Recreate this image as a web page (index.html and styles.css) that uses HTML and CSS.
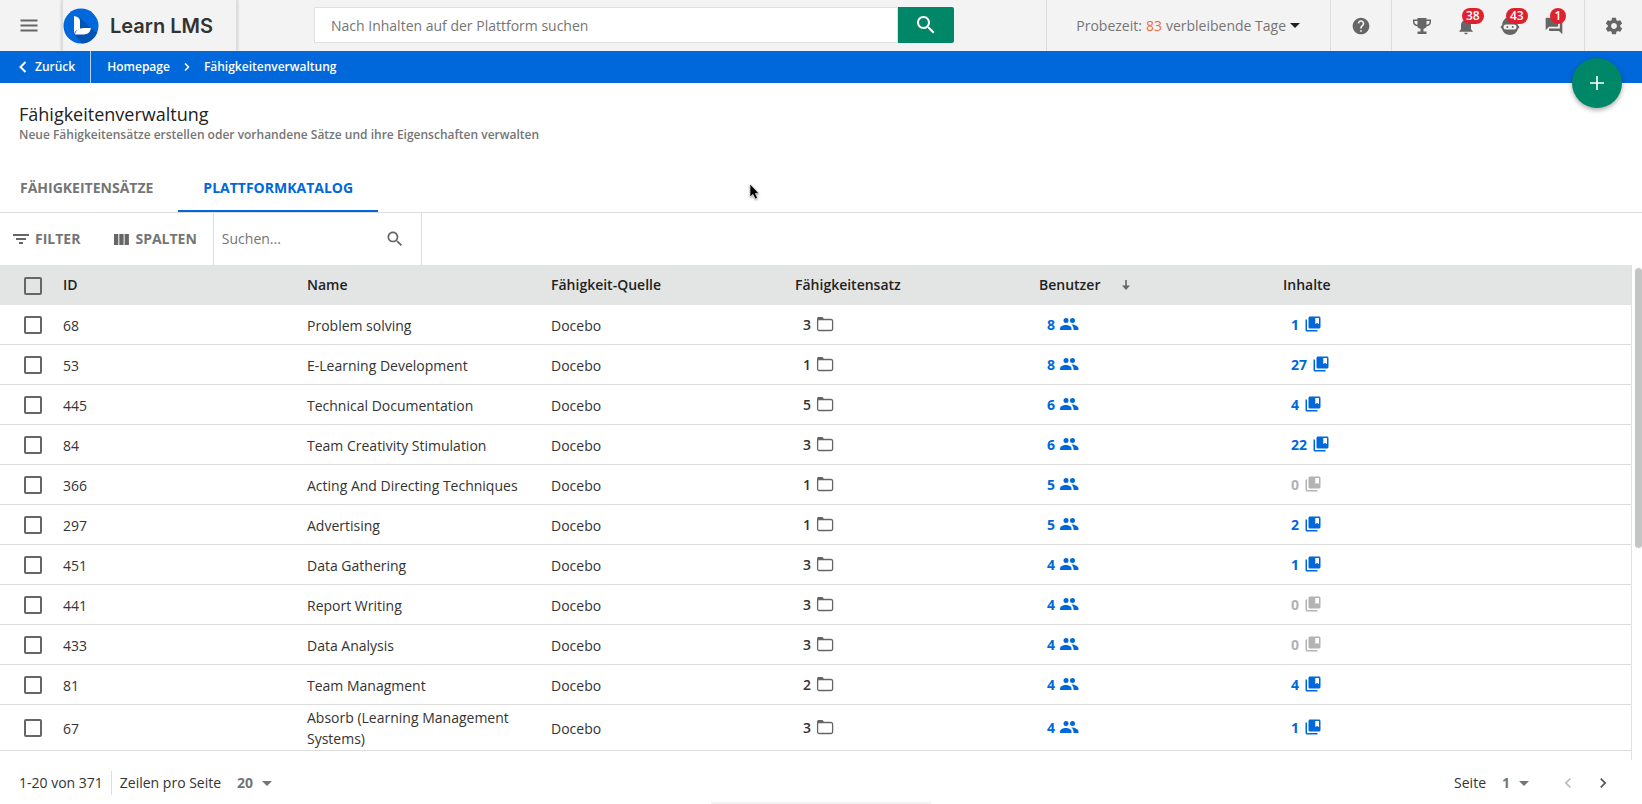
FILE: index.html
```html
<!DOCTYPE html>
<html lang="de">
<head>
    <meta charset="UTF-8">
    <meta name="viewport" content="width=device-width, initial-scale=1.0">
    <title>Fähigkeitenverwaltung</title>
    <link rel="stylesheet" href="styles.css">
</head>
<body>

<svg class="sprite" aria-hidden="true">
    <symbol id="i-search" viewBox="0 0 24 24"><path d="M15.5 14h-.79l-.28-.27C15.41 12.59 16 11.11 16 9.5 16 5.91 13.09 3 9.5 3S3 5.91 3 9.5 5.91 16 9.5 16c1.61 0 3.09-.59 4.23-1.57l.27.28v.79l5 4.99L20.49 19l-4.99-5zm-6 0C7.01 14 5 11.99 5 9.5S7.01 5 9.5 5 14 7.01 14 9.5 11.99 14 9.5 14z"/></symbol>
    <symbol id="i-folder" viewBox="0 0 18 16"><path d="M1 4h7V3L6.500 1H2.500Q1 1 1 2.500z"/><path d="M1.600 5V13a1.500 1.500 0 0 0 1.500 1.500h12a1.500 1.500 0 0 0 1.500-1.500V5a1.500 1.500 0 0 0-1.500-1.500H3A1.500 1.500 0 0 0 1.600 5z" fill="none" stroke="currentColor" stroke-width="1.300"/></symbol>
    <symbol id="i-people" viewBox="0 0 20 14"><circle cx="7" cy="3.500" r="2.500"/><circle cx="13.500" cy="3.500" r="2.500"/><path d="M1 13v-1.300C1 9.200 4 8 6.800 8s5.700 1.200 5.700 3.700V13z"/><path d="M12.400 7.500c3.600.1 7.100 1.800 7.100 4.200V13h-5v-1.300c0-1.600-1-3.200-2.100-4.200z"/></symbol>
    <symbol id="i-book" viewBox="0 0 24 24"><path d="M4 6H2v14c0 1.100.9 2 2 2h14v-2H4V6z"/><path d="M20 2H8c-1.100 0-2 .9-2 2v12c0 1.100.9 2 2 2h12c1.100 0 2-.9 2-2V4c0-1.100-.9-2-2-2zm0 10l-2.500-1.500L15 12V4h5v8z"/></symbol>
    <symbol id="i-left" viewBox="0 0 24 24"><path d="M15.410 7.410L14 6l-6 6 6 6 1.410-1.410L10.830 12z"/></symbol>
    <symbol id="i-right" viewBox="0 0 24 24"><path d="M10 6L8.590 7.410 13.170 12l-4.580 4.590L10 18l6-6z"/></symbol>
    <symbol id="i-caret" viewBox="0 0 10 5"><path d="M0 0h10L5 5z"/></symbol>
</svg>

<header class="topbar">
    <button class="menu-btn" aria-label="Menü">
        <svg width="24" height="24" viewBox="0 0 24 24"><path d="M3.500 17.500h17v-2h-17zm0-5h17v-2h-17zm0-7v2h17v-2z"/></svg>
    </button>
    <a class="logo" href="#">
        <svg width="36" height="36" viewBox="0 0 36 36">
            <circle cx="18" cy="18" r="17.500" fill="#0068da"/>
            <path d="M16 9l12.500 12L34 25a17.500 17.500 0 0 1-15 10.500L11 26z" fill="#0053b5"/>
            <path d="M11 8q6 1 6 5v8.500q-5.500.5-6 5z" fill="#fff"/>
            <path d="M12 26.500q1-6.500 9-6.500h7q-1 6-7 6.500z" fill="#fff"/>
        </svg>
        <span>Learn LMS</span>
    </a>
    <form class="search" role="search">
        <input type="text" placeholder="Nach Inhalten auf der Plattform suchen" aria-label="Nach Inhalten auf der Plattform suchen">
        <button type="button" aria-label="Suchen"><svg width="24" height="24"><use href="#i-search"/></svg></button>
    </form>
    <div class="topbar-right">
        <button class="trial">Probezeit: <b>83</b> verbleibende Tage <svg width="10" height="5"><use href="#i-caret"/></svg></button>
        <button class="cell help" aria-label="Hilfe">
            <svg width="20" height="20" viewBox="0 0 24 24"><path d="M12 2C6.480 2 2 6.480 2 12s4.480 10 10 10 10-4.480 10-10S17.520 2 12 2zm1 17h-2v-2h2v2zm2.070-7.750l-.9.920C13.450 12.900 13 13.500 13 15h-2v-.5c0-1.100.450-2.100 1.170-2.830l1.240-1.260c.370-.360.590-.860.590-1.410 0-1.100-.9-2-2-2s-2 .9-2 2H8c0-2.210 1.790-4 4-4s4 1.790 4 4c0 .880-.360 1.680-.930 2.250z"/></svg>
        </button>
        <div class="cell icons">
            <button aria-label="Erfolge">
                <svg width="20" height="20" viewBox="0 0 20 20"><path d="M5.500 2h9v1.500H19V6c0 2.300-1.600 4-4.200 4.200-.7 1.500-1.900 2.300-3.300 2.600v2.700h3V18h-9v-2.500h3v-2.700c-1.400-.3-2.600-1.100-3.300-2.600C2.600 10 1 8.300 1 6V3.500h4.500zm0 3h-3v1c0 1.500.9 2.500 3 2.700zm9 0v3.700c2.100-.2 3-1.200 3-2.700V5z"/></svg>
            </button>
            <button aria-label="Mitteilungen">
                <svg width="20" height="20" viewBox="0 0 24 24"><path d="M12 22c1.100 0 2-.9 2-2h-4c0 1.100.890 2 2 2zm6-6v-5c0-3.070-1.640-5.640-4.500-6.320V4c0-.830-.670-1.500-1.500-1.500s-1.500.670-1.500 1.500v.680C7.630 5.360 6 7.920 6 11v5l-2 2v1h16v-1l-2-2z"/></svg>
                <span class="badge">38</span>
            </button>
            <button aria-label="Coach">
                <svg width="20" height="20" viewBox="0 0 20 20"><path d="M10 1c4.400 0 7.500 3.400 7.800 8L19.500 11l-1.700 2.300C16.800 16.700 14 19 10 19s-6.800-2.300-7.800-5.700L.5 11l1.700-2C2.500 4.400 5.600 1 10 1zM6 8.500a2.500 2.500 0 0 0 0 5h8a2.500 2.500 0 0 0 0-5z"/><circle cx="7.300" cy="11" r="1"/><circle cx="12.700" cy="11" r="1"/></svg>
                <span class="badge">43</span>
            </button>
            <button aria-label="Nachrichten">
                <svg width="20" height="20" viewBox="0 0 24 24"><path d="M21 6h-2v9H6v2c0 .550.450 1 1 1h11l4 4V7c0-.550-.450-1-1-1zm-4 6V3c0-.550-.450-1-1-1H3c-.550 0-1 .450-1 1v14l4-4h10c.550 0 1-.450 1-1z"/></svg>
                <span class="badge">1</span>
            </button>
        </div>
        <button class="cell gear" aria-label="Einstellungen">
            <svg width="20" height="20" viewBox="0 0 24 24"><path d="M19.430 12.980c.040-.320.070-.640.070-.980s-.030-.660-.070-.980l2.110-1.650c.190-.150.240-.420.120-.640l-2-3.460c-.120-.220-.390-.300-.610-.220l-2.490 1c-.520-.400-1.080-.730-1.690-.980l-.380-2.650C14.460 2.180 14.250 2 14 2h-4c-.250 0-.460.180-.490.420l-.380 2.650c-.610.250-1.170.590-1.690.980l-2.490-1c-.230-.090-.490 0-.610.220l-2 3.460c-.130.220-.070.490.120.640l2.110 1.650c-.040.320-.070.650-.070.980s.030.660.070.980l-2.110 1.650c-.190.150-.240.420-.120.640l2 3.460c.120.220.390.300.610.220l2.490-1c.520.400 1.080.730 1.690.980l.380 2.650c.030.240.240.420.490.420h4c.250 0 .460-.180.490-.420l.380-2.650c.610-.250 1.170-.590 1.690-.980l2.490 1c.230.090.490 0 .610-.220l2-3.460c.120-.220.070-.490-.120-.640l-2.110-1.650zM12 15.500c-1.930 0-3.500-1.570-3.500-3.500s1.570-3.500 3.500-3.500 3.500 1.570 3.500 3.500-1.570 3.500-3.500 3.500z"/></svg>
        </button>
    </div>
</header>

<nav class="crumbs">
    <a class="back" href="#"><svg width="8" height="12" viewBox="0 0 8 12"><path d="M6.500 1L1.500 6l5 5" fill="none" stroke="currentColor" stroke-width="2"/></svg>Zurück</a>
    <a href="#">Homepage</a>
    <svg width="6" height="8" viewBox="0 0 6 8"><path d="M1 0.500L4.500 4 1 7.500" fill="none" stroke="currentColor" stroke-width="1.500"/></svg>
    <a href="#">Fähigkeitenverwaltung</a>
    <button class="fab" aria-label="Hinzufügen"><svg width="14" height="14" viewBox="0 0 14 14"><path d="M6.200 0h1.600v6.200H14v1.600H7.800V14H6.200V7.800H0V6.200h6.200z"/></svg></button>
</nav>

<section class="page-head">
    <h1>Fähigkeitenverwaltung</h1>
    <p>Neue Fähigkeitensätze erstellen oder vorhandene Sätze und ihre Eigenschaften verwalten</p>
</section>

<div class="tabs" role="tablist">
    <button role="tab">FÄHIGKEITENSÄTZE</button>
    <button role="tab" class="active" aria-selected="true">PLATTFORMKATALOG</button>
</div>

<div class="toolbar">
    <button class="tool filter"><svg width="16" height="10" viewBox="0 0 16 10"><path d="M0 0h16v2H0zM3 4h10v2H3zM6 8h4v2H6z"/></svg>FILTER</button>
    <button class="tool"><svg width="15" height="11" viewBox="0 0 15 11"><path d="M0 0h4.300v11H0zM5.300 0h4.300v11H5.300zM10.600 0h4.300v11h-4.300z"/></svg>SPALTEN</button>
    <div class="table-search">
        <input type="text" placeholder="Suchen..." aria-label="Suchen">
        <svg width="20" height="20"><use href="#i-search"/></svg>
    </div>
</div>

<main class="grid">
    <div class="grid-scroll">
        <table>
            <thead>
            <tr>
                <th class="check"><input type="checkbox" aria-label="Alle auswählen"></th>
                <th class="col">ID</th>
                <th class="col">Name</th>
                <th class="col">Fähigkeit-Quelle</th>
                <th class="col">Fähigkeitensatz</th>
                <th class="col">Benutzer <svg class="sort" width="8" height="10" viewBox="0 0 8 10"><path d="M3.200 0h1.600v5.500H8L4 10 0 5.500h3.200z"/></svg></th>
                <th class="col">Inhalte</th>
                <th></th>
            </tr>
            </thead>
            <tbody id="skills"></tbody>
        </table>
    </div>
    <div class="scrollbar"><div class="thumb"></div></div>
</main>

<footer class="pager">
    <span class="range">1-20 von 371</span>
    <label for="rows">Zeilen pro Seite</label>
    <span class="select">
        <select id="rows"><option>20</option></select>
        <svg width="10" height="5"><use href="#i-caret"/></svg>
    </span>
    <span class="spacer"></span>
    <label for="page">Seite</label>
    <span class="select page">
        <select id="page"><option>1</option></select>
        <svg width="10" height="5"><use href="#i-caret"/></svg>
    </span>
    <button class="step" aria-label="Vorherige Seite" disabled><svg width="20" height="20"><use href="#i-left"/></svg></button>
    <button class="step" aria-label="Nächste Seite"><svg width="20" height="20"><use href="#i-right"/></svg></button>
</footer>

<svg class="cursor" width="14" height="20" viewBox="0 0 14 20"><path d="M1 1v13l3-2.700 2.200 4.700 2.300-1-2.100-4.600H10z" stroke="#fff" stroke-width=".6"/></svg>

<script>
    // id, name, skill sets, users, contents
    const skills = [
        [68, 'Problem solving', 3, 8, 1],
        [53, 'E-Learning Development', 1, 8, 27],
        [445, 'Technical Documentation', 5, 6, 4],
        [84, 'Team Creativity Stimulation', 3, 6, 22],
        [366, 'Acting And Directing Techniques', 1, 5, 0],
        [297, 'Advertising', 1, 5, 2],
        [451, 'Data Gathering', 3, 4, 1],
        [441, 'Report Writing', 3, 4, 0],
        [433, 'Data Analysis', 3, 4, 0],
        [81, 'Team Managment', 2, 4, 4],
        [67, 'Absorb (Learning Management Systems)', 3, 4, 1]
    ];

    document.getElementById('skills').innerHTML = skills.map(([id, name, sets, users, contents]) => `
        <tr>
            <td class="check"><input type="checkbox" aria-label="${name}"></td>
            <td>${id}</td>
            <td>${name}</td>
            <td>Docebo</td>
            <td><span class="count sets">${sets}<svg width="18" height="16"><use href="#i-folder"/></svg></span></td>
            <td><a href="#" class="count users">${users}<svg width="20" height="14"><use href="#i-people"/></svg></a></td>
            <td><a href="#" class="count contents${contents ? '' : ' none'}">${contents}<svg width="18" height="18"><use href="#i-book"/></svg></a></td>
            <td></td>
        </tr>`).join('');
</script>

</body>
</html>
```
FILE: styles.css
```css
* {
    margin: 0;
    padding: 0;
    box-sizing: border-box;
}

body {
    display: flex;
    flex-direction: column;
    height: 100vh;
    overflow: hidden;
    font-family: "Open Sans", "Noto Sans", sans-serif;
    font-size: 14px;
    line-height: 20px;
    color: #333;
    background: #fff;
}

button, input, select {
    font: inherit;
    color: inherit;
    border: none;
    background: none;
}

button {
    cursor: pointer;
}

a {
    color: inherit;
    text-decoration: none;
}

svg {
    display: block;
    flex: none;
    fill: currentColor;
}

input::placeholder {
    color: #757575;
    opacity: 1;
}

.sprite {
    position: absolute;
    width: 0;
    height: 0;
}

/* top bar */
.topbar {
    display: flex;
    flex: none;
    height: 51px;
    background: #f3f3f3;
    color: #666;
}

.menu-btn {
    width: 62px;
    padding-left: 17px;
}

.logo {
    display: flex;
    align-items: center;
    gap: 11px;
    width: 175px;
    border-left: 1px solid #ddd;
    border-right: 1px solid #ddd;
    box-shadow: 0 0 3px rgba(0, 0, 0, .25);
    color: #333;
    font-family: Inter, sans-serif;
    font-size: 20px;
    font-weight: 600;
}

.search {
    display: flex;
    flex: 0 1 640px;
    height: 36px;
    margin: 7px 0 0 77px;
}

.search input {
    flex: 1;
    min-width: 0;
    padding: 2px 16px 0;
    border: 1px solid #e0e0e0;
    background: #fff;
}

.search button {
    display: flex;
    align-items: center;
    justify-content: center;
    width: 56px;
    border-radius: 0 2px 2px 0;
    background: #008767;
    color: #fff;
}

.topbar-right {
    display: flex;
    margin-left: auto;
}

.trial {
    display: flex;
    align-items: center;
    gap: 4px;
    padding: 0 30px 0 29px;
    border-left: 1px solid #ddd;
    color: #757575;
}

.trial b {
    color: #f26a3d;
    font-weight: 400;
}

.trial svg {
    color: #222;
}

.cell {
    display: flex;
    align-items: center;
    justify-content: center;
    border-left: 1px solid #ddd;
}

.help {
    width: 61px;
}

.icons {
    gap: 24px;
    width: 193px;
}

.icons button {
    position: relative;
}

.badge {
    position: absolute;
    top: -8px;
    left: 6px;
    min-width: 16px;
    padding: 0 4px;
    border-radius: 8px;
    background: #df202f;
    color: #fff;
    font-size: 12px;
    font-weight: 600;
    line-height: 16px;
}

.gear {
    width: 58px;
}

/* breadcrumbs */
.crumbs {
    position: relative;
    display: flex;
    flex: none;
    align-items: center;
    gap: 14px;
    height: 32px;
    background: #0068da;
    color: #fff;
    font-size: 12px;
    font-weight: 600;
}

.back {
    display: flex;
    align-items: center;
    gap: 8px;
    height: 32px;
    margin-right: 2px;
    padding: 0 15px 0 19px;
    border-right: 1px solid #b8d4f4;
}

.fab {
    position: absolute;
    top: 7px;
    right: 20px;
    display: flex;
    align-items: center;
    justify-content: center;
    width: 50px;
    height: 50px;
    border-radius: 50%;
    background: #008767;
    box-shadow: 0 2px 5px rgba(0, 0, 0, .35);
    color: #fff;
}

/* page title */
.page-head {
    flex: none;
    padding: 21px 19px 0;
}

.page-head h1 {
    color: #222;
    font-size: 18px;
    font-weight: 500;
    line-height: 21px;
}

.page-head p {
    color: #757575;
    font-size: 12px;
    font-weight: 600;
    line-height: 20px;
}

/* tabs */
.tabs {
    display: flex;
    flex: none;
    height: 48px;
    margin-top: 20px;
    border-bottom: 1px solid #ddd;
    color: #757575;
}

.tabs button {
    padding: 0 25px 0 20px;
    border-bottom: 2px solid transparent;
    font-weight: 700;
}

.tabs .active {
    padding: 0 25px;
    border-color: #0068da;
    color: #0068da;
}

/* toolbar */
.toolbar {
    display: flex;
    flex: none;
    height: 52px;
    color: #666;
}

.tool {
    display: flex;
    align-items: center;
    gap: 6px;
    padding: 0 16px 0 18px;
    color: #757575;
    font-weight: 700;
}

.filter {
    padding-left: 13px;
}

.tool svg {
    color: #666;
}

.table-search {
    display: flex;
    align-items: center;
    width: 209px;
    padding: 0 16px 0 8px;
    border-left: 1px solid #ddd;
    border-right: 1px solid #ddd;
}

.table-search input {
    flex: 1;
    min-width: 0;
}

/* skills table */
.grid {
    display: flex;
    flex: 1;
    min-height: 0;
}

.grid-scroll {
    flex: 1;
    overflow: hidden;
    border-right: 1px solid #e0e2e1;
}

.scrollbar {
    width: 10px;
    padding: 3px 0 0 3px;
}

.thumb {
    width: 7px;
    height: 57%;
    border-radius: 4px;
    background: #c4c6c5;
}

table {
    width: 100%;
    table-layout: fixed;
    border-spacing: 0;
}

th, td {
    height: 40px;
    padding: 0 8px;
    text-align: left;
}

th {
    background: #e2e5e4;
    color: #222;
    font-weight: 600;
}

td {
    padding: 2px 8px 1px;
    border-bottom: 1px solid #ddd;
    line-height: 21px;
}

.check {
    width: 55px;
    padding: 1px 0 0 24px;
}

.col {
    width: 244px;
}

input[type="checkbox"] {
    display: block;
    width: 18px;
    height: 18px;
    border: 2px solid #666;
    border-radius: 2px;
    appearance: none;
}

.sort {
    display: inline-block;
    margin-left: 18px;
    color: #666;
}

.count {
    display: flex;
    align-items: center;
    gap: 5px;
    padding: 0 0 2px 8px;
    font-weight: 600;
}

.sets svg {
    color: #666;
}

.users, .contents {
    color: #0068da;
    font-weight: 700;
}

.users {
    gap: 4px;
}

.none {
    color: #b3b3b3;
}

/* pager */
.pager {
    position: relative;
    display: flex;
    flex: none;
    align-items: center;
    height: 44px;
    padding: 2px 29px 0 19px;
}

/* edge of the closed bottom drawer */
.pager::after {
    content: "";
    position: absolute;
    bottom: 0;
    left: 50%;
    width: 220px;
    height: 2px;
    margin-left: -110px;
    background: #f3f3f3;
}

.range {
    margin-right: 8px;
    padding: 2px 8px 2px 0;
    border-right: 1px solid #ddd;
}

.spacer {
    flex: 1;
}

.select {
    display: flex;
    align-items: center;
    gap: 8px;
    margin-left: 16px;
    color: #757575;
    font-weight: 700;
}

.select select {
    appearance: none;
    font-weight: 700;
}

.page {
    margin-right: 29px;
}

.step {
    color: #555;
}

.step + .step {
    margin-left: 15px;
}

.step:disabled {
    color: #bbb;
}

.cursor {
    position: absolute;
    top: 183px;
    left: 749px;
    color: #000;
    filter: drop-shadow(0 1px 1px rgba(0, 0, 0, .4));
}
```
